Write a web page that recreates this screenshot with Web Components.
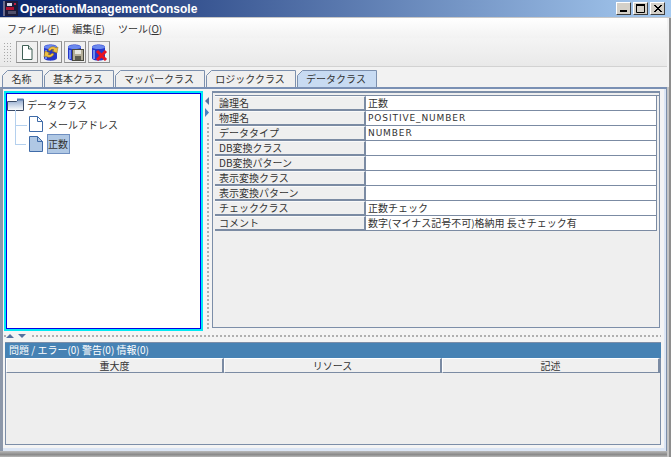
<!DOCTYPE html>
<html>
<head>
<meta charset="utf-8">
<style>
    html, body { margin: 0; padding: 0; width: 671px; height: 457px; overflow: hidden; background: #b4b4b4; }
    body { font: 10px "Noto Sans CJK JP", "DejaVu Sans", sans-serif; color: #222; }
</style>
</head>
<body>
<app-window>
    <title-bar slot="title">OperationManagementConsole</title-bar>
    <menu-bar slot="menu"></menu-bar>
    <tool-bar slot="tools"></tool-bar>
    <tab-strip slot="tabs"></tab-strip>
    <tree-pane slot="tree"></tree-pane>
    <prop-table slot="props"></prop-table>
    <problem-pane slot="problems"></problem-pane>
</app-window>

<script>
class AppWindow extends HTMLElement {
    constructor() {
        super();
        this.attachShadow({ mode: 'open' });
        this.shadowRoot.innerHTML = `
        <style>
            :host { display: flex; flex-direction: column; width: 671px; height: 457px; box-sizing: border-box; background: #f2f2f2; position: relative; }
            .frame { flex: 1; display: flex; flex-direction: column; margin-right: 4px; min-height: 0; }
            .body {
                height: 364px; box-sizing: border-box;
                border-top: 2px solid #7a90b4; border-left: 3px solid #8d98aa; border-right: 1px solid #7c8ea8;
                display: flex; flex-direction: column; padding: 2px 5px 6px 1px; background: #f4f4f4;
                box-shadow: inset -2px 0 0 #dbe5f4, inset 0 -3px 0 #dbe5f4;
            }
            .main { height: 240px; display: flex; }
            .vsplit {
                width: 9px; position: relative;
                background: radial-gradient(circle at 1px 1px, #b0b0b0 1px, transparent 1.2px) 4px 0 / 3px 4px repeat-y;
            }
            .vsplit svg { position: absolute; left: 0; top: 0; background: #f4f4f4; }
            .hsplit {
                height: 11px; position: relative;
                background: radial-gradient(circle at 1px 1px, #b0b0b0 1px, transparent 1.2px) 0 4px / 4px 3px repeat-x;
            }
            .hsplit svg { position: absolute; left: 2px; top: 3px; background: #f4f4f4; }
            .end { flex: 1; background: linear-gradient(#b8b8b8, #8a8a8a 60%, #b8b8b8); }
            .edge { position: absolute; right: 0; top: 18px; bottom: 0; width: 2px; background: #8e8e8e; }
            .edge2 { position: absolute; right: 2px; top: 87px; bottom: 0; width: 2px; background: #c4c4c4; }
        </style>
        <slot name="title"></slot>
        <div class="frame">
            <slot name="menu"></slot>
            <slot name="tools"></slot>
            <slot name="tabs"></slot>
            <div class="body">
                <div class="main">
                    <slot name="tree"></slot>
                    <div class="vsplit">
                        <svg width="8" height="30"><path d="M6 6v8L2 10z" fill="#56729f"/><path d="M2 17v9l4-4.500z" fill="#4a80c0"/></svg>
                    </div>
                    <slot name="props"></slot>
                </div>
                <div class="hsplit">
                    <svg width="24" height="5"><path d="M0 4l4-4 4 4z" fill="#56729f"/><path d="M12 0h8l-4 4z" fill="#56729f"/></svg>
                </div>
                <slot name="problems"></slot>
            </div>
            <div class="end"></div>
        </div>
        <div class="edge2"></div>
        <div class="edge"></div>
        `;
    }
}

class TitleBar extends HTMLElement {
    constructor() {
        super();
        this.attachShadow({ mode: 'open' });
        this.shadowRoot.innerHTML = `
        <style>
            :host {
                display: flex; align-items: center; height: 18px; box-sizing: border-box;
                background: linear-gradient(90deg, #0a246a, #a6caf0);
                border-bottom: 1px solid #c8c8c8;
                color: white; padding: 0 6px 0 3px;
            }
            .text { flex: 1; margin-left: 2px; font: bold 12px "Liberation Sans", sans-serif; }
            .btn {
                width: 15px; height: 13px; margin-left: 2px; box-sizing: border-box;
                background: #d4d0c8; border: 1px solid; border-color: #fff #404040 #404040 #fff;
                display: flex; align-items: center; justify-content: center;
            }
        </style>
        <svg width="15" height="15" viewBox="0 0 15 15">
            <rect width="15" height="15" fill="#1c1c3a"/>
            <rect x="0" y="0" width="2" height="15" fill="#6a6a8a"/>
            <path d="M4 2h5v3H4z" fill="#d8d8e8"/>
            <path d="M3 6h8v3H3z" fill="#b01030"/>
            <path d="M5 10h8v3H5z" fill="#50506c"/>
            <path d="M11 2h2v2h-2z" fill="#c02040"/>
        </svg>
        <span class="text"><slot></slot></span>
        <span class="btn"><svg width="11" height="9"><rect x="2" y="6" width="7" height="2" fill="#000"/></svg></span>
        <span class="btn"><svg width="11" height="9"><path d="M1.500 1.500h8v7h-8z" fill="none" stroke="#000"/><rect x="1" y="0" width="9" height="2" fill="#000"/></svg></span>
        <span class="btn"><svg width="11" height="9"><path d="M2 1l7 7M3 1l7 7M9 1L2 8M10 1L3 8" stroke="#000" fill="none"/></svg></span>
        `;
    }
}

class MenuBar extends HTMLElement {
    constructor() {
        super();
        this.attachShadow({ mode: 'open' });
        this.shadowRoot.innerHTML = `
        <style>
            :host {
                display: flex; gap: 13px; height: 20px; align-items: center; box-sizing: border-box;
                padding: 1px 0 0 7px; font-size: 10px; color: #333;
                background: linear-gradient(#ffffff, #f2f2f2);
            }
            u { text-decoration: underline; }
        </style>
        <span>ファイル(<u>F</u>)</span>
        <span>編集(<u>E</u>)</span>
        <span>ツール(<u>O</u>)</span>
        `;
    }
}

class ToolBar extends HTMLElement {
    constructor() {
        super();
        this.attachShadow({ mode: 'open' });
        const can = `<path d="M2 4c0-3.500 13-3.500 13 0v11c0 3.500-13 3.500-13 0z" fill="#2536c8"/><path d="M2 4c0 2.800 13 2.800 13 0s-13-2.800-13 0z" fill="#6a88ee"/><path d="M4 7v9" stroke="#6f8cf0" stroke-width="2"/>`;
        this.shadowRoot.innerHTML = `
        <style>
            :host {
                display: flex; align-items: center; height: 29px; box-sizing: border-box; gap: 2px;
                padding: 0 0 0 3px;
                background: linear-gradient(#f4f4f4, #e9e9e9);
                border-bottom: 1px solid #d2d2d2;
            }
            .grip { width: 9px; height: 21px; margin-right: 2px; background: radial-gradient(#a8a8a8 35%, transparent 40%) 0 0 / 3px 3px; }
            .b {
                width: 22px; height: 22px; box-sizing: border-box; background: #f0f0f0;
                border: 1px solid #a4a4a4; border-right-color: #8e8e8e; border-bottom-color: #8e8e8e;
                display: flex; align-items: center; justify-content: center;
            }
        </style>
        <span class="grip"></span>
        <span class="b"><svg width="18" height="18"><path d="M4.500 2.500h6l3.500 3.500v10.500H4.500z" fill="#fff" stroke="#3f5f55"/><path d="M10.500 2.500V6H14" fill="#d8e4dc" stroke="#3f5f55"/></svg></span>
        <span class="b"><svg width="18" height="18">${can}<path d="M6 7c2-4 6-4 8-2l2-1-1 6-5-2 2-1c-1-1-3-1-4 1z" fill="#f0c040" stroke="#8a6a10" stroke-width=".5"/><path d="M12 11c-2 4-6 4-8 2l-2 1 1-6 5 2-2 1c1 1 3 1 4-1z" fill="#f0c040" stroke="#8a6a10" stroke-width=".5"/></svg></span>
        <span class="b"><svg width="18" height="18">${can}<rect x="6.500" y="6.500" width="11" height="11" fill="#b4ae98" stroke="#4a4a40"/><rect x="9" y="7" width="6" height="4" fill="#e8e8e0"/><rect x="9" y="13" width="6" height="4" fill="#5c5c50"/></svg></span>
        <span class="b"><svg width="18" height="18">${can}<path d="M7 8l9 9M16 8l-9 9" stroke="#e81020" stroke-width="3"/></svg></span>
        `;
    }
}

class TabStrip extends HTMLElement {
    constructor() {
        super();
        this.attachShadow({ mode: 'open' });
        const tabs = [['名称', 41], ['基本クラス', 70], ['マッパークラス', 90], ['ロジッククラス', 90], ['データクラス', 80]];
        const html = tabs.map((t, i) => {
            const w = t[1];
            const on = i === tabs.length - 1;
            return `<span class="tab" style="width:${w}px">
                <svg width="${w}" height="17"><path d="M.5 17V5.500L5.500 .5H${w - .5}V17" fill="${on ? '#c8dbf2' : '#efefef'}" stroke="#7c90ae"/></svg>
                <b>${t[0]}</b></span>`;
        }).join('');
        this.shadowRoot.innerHTML = `
        <style>
            :host { display: flex; gap: 1px; height: 17px; margin-top: 3px; padding-left: 2px; font-size: 10px; color: #333; }
            .tab { position: relative; display: flex; align-items: center; justify-content: center; height: 17px; }
            .tab svg { position: absolute; left: 0; top: 0; }
            b { position: relative; font-weight: 400; padding-right: 2px; }
        </style>
        ${html}
        `;
    }
}

class TreePane extends HTMLElement {
    constructor() {
        super();
        this.attachShadow({ mode: 'open' });
        const doc = (fill) => `<svg width="14" height="16"><path d="M.5 .5h8l5 5v10H.5z" fill="${fill}" stroke="#3f6ba8"/><path d="M8.500 .5v5H13.500" fill="none" stroke="#3f6ba8"/></svg>`;
        this.shadowRoot.innerHTML = `
        <style>
            :host {
                display: block; width: 199px; height: 240px; box-sizing: border-box;
                border: 2px solid #00e8f4;
                box-shadow: inset 1px 1px 0 #0000e6, inset -1px -1px 0 #0000e6;
                background: #fff; padding: 1px 0 0 1px; color: #333; font-size: 10px; position: relative;
            }
            .row { display: flex; align-items: center; height: 20px; gap: 3px; }
            .kid { padding-left: 22px; gap: 4px; }
            .txt { margin-left: 1px; }
            .sel { background: #b0c8e4; border: 1px solid #6f8fc0; padding-left: 0; line-height: 18px; width: 23px; box-sizing: border-box; height: 20px; white-space: nowrap; }
            .guide { position: absolute; left: 9px; top: 17px; width: 11px; height: 35px; box-sizing: border-box; border: solid #b4d0ee; border-width: 0 0 1px 1px; }
            .guide i { position: absolute; left: 0; top: 15px; width: 11px; height: 1px; background: #b4d0ee; }
        </style>
        <div class="guide"><i></i></div>
        <div class="row">
            <svg width="17" height="13">
                <defs><linearGradient id="f" x1="0" y1="0" x2="0" y2="1"><stop offset="0" stop-color="#8ea6cc"/><stop offset="1" stop-color="#ffffff"/></linearGradient></defs>
                <path d="M.5 3.500h9l2-2h5v11H.5z" fill="url(#f)" stroke="#3a4a66"/><path d="M10 .5h6.500v2H10z" fill="#5a7cb0"/>
            </svg>
            <span>データクラス</span>
        </div>
        <div class="row kid">${doc('#fff')}<span class="txt">メールアドレス</span></div>
        <div class="row kid">${doc('#b0c8e4')}<span class="sel">正数</span></div>
        `;
    }
}

class PropTable extends HTMLElement {
    constructor() {
        super();
        this.attachShadow({ mode: 'open' });
        const rows = [
            ['論理名', '正数'],
            ['物理名', 'POSITIVE_NUMBER'],
            ['データタイプ', 'NUMBER'],
            ['DB変換クラス', ''],
            ['DB変換パターン', ''],
            ['表示変換クラス', ''],
            ['表示変換パターン', ''],
            ['チェッククラス', '正数チェック'],
            ['コメント', '数字(マイナス記号不可)格納用 長さチェック有']
        ];
        this.shadowRoot.innerHTML = `
        <style>
            :host {
                display: block; width: 448px; height: 237px; box-sizing: border-box;
                border: solid #7c8ea8; border-width: 2px 1px 1px 1px;
                background: #efefef; font-size: 10px; color: #333;
                padding: 2px 0 0 2px;
            }
            .grid { display: grid; grid-template-columns: 151px 291px; grid-auto-rows: 15px; border-top: 1px solid #7b8ba3; }
            .k, .v { box-sizing: border-box; line-height: 12px; white-space: nowrap; overflow: hidden; }
            .k { padding-left: 4px; background: #efefef; border-bottom: 2px solid #7b8ba3; border-right: 2px solid #7b8ba3; border-top: 1px solid #fafafa; }
            .v { padding: 1px 0 0 2px; background: #fff; border-right: 1px solid #7b8ba3; border-bottom: 1px solid #7b8ba3; }
            .lat { font-family: "DejaVu Sans", sans-serif; font-size: 9px; letter-spacing: .9px; }
        </style>
        <div class="grid">
            ${rows.map(r => `<div class="k">${r[0]}</div><div class="v${/^[A-Z_]+$/.test(r[1]) ? ' lat' : ''}">${r[1]}</div>`).join('')}
        </div>
        `;
    }
}

class ProblemPane extends HTMLElement {
    constructor() {
        super();
        this.attachShadow({ mode: 'open' });
        this.shadowRoot.innerHTML = `
        <style>
            :host {
                display: flex; flex-direction: column; height: 103px; box-sizing: border-box;
                margin-left: 1px; width: 656px; border-top: 1px solid #7c8ea8;
                font-size: 10px; color: #333;
            }
            .head { height: 15px; background: #4682b4; color: #fff; padding-left: 4px; line-height: 14px; }
            .list { flex: 1; background: #eeeeee; border: solid #7c8ea8; border-width: 0 1px 1px 1px; }
            .cols { display: grid; grid-template-columns: 218px 218px 1fr; height: 15px; }
            .cols span { text-align: center; border: 1px solid #7b8ba3; border-width: 1px 2px 1px 1px; border-top-color: #fff; border-left-color: #fff; line-height: 13px; box-sizing: border-box; background: #f0f0f0; }
        </style>
        <div class="head">問題 / エラー(0) 警告(0) 情報(0)</div>
        <div class="list">
            <div class="cols"><span>重大度</span><span>リソース</span><span>記述</span></div>
        </div>
        `;
    }
}

customElements.define('app-window', AppWindow);
customElements.define('title-bar', TitleBar);
customElements.define('menu-bar', MenuBar);
customElements.define('tool-bar', ToolBar);
customElements.define('tab-strip', TabStrip);
customElements.define('tree-pane', TreePane);
customElements.define('prop-table', PropTable);
customElements.define('problem-pane', ProblemPane);
</script>
</body>
</html>
